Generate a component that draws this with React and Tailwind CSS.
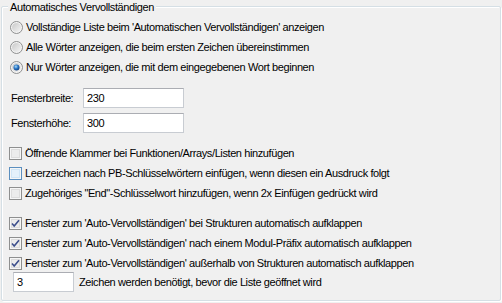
import React from 'react';

const font = { fontFamily: '"Liberation Sans", Arial, sans-serif' };

function Radio({ checked }) {
  return (
    <svg width="13" height="13" viewBox="0 0 13 13" className="shrink-0">
      <defs>
        <linearGradient id="rbg" x1="0" y1="0" x2="1" y2="1">
          <stop offset="0" stopColor="#c9c9c9" />
          <stop offset="1" stopColor="#f4f4f4" />
        </linearGradient>
        <radialGradient id="rdot" cx="0.4" cy="0.35" r="0.7">
          <stop offset="0" stopColor="#a9dcf8" />
          <stop offset="0.5" stopColor="#2a76c6" />
          <stop offset="1" stopColor="#0f3a78" />
        </radialGradient>
      </defs>
      <circle cx="6.5" cy="6.5" r="6" fill="#f4f4f4" stroke="#8e8f8f" strokeWidth="1" />
      <circle cx="6.5" cy="6.5" r="4.5" fill="url(#rbg)" />
      {checked && <circle cx="6.5" cy="6.5" r="3" fill="url(#rdot)" />}
    </svg>
  );
}

function Check({ checked, hover }) {
  return (
    <svg width="13" height="13" viewBox="0 0 13 13" className="shrink-0">
      <rect x="0.5" y="0.5" width="12" height="12" fill="#f6f6f6" stroke={hover ? '#5b8fbf' : '#8e8f8f'} />
      <rect x="2" y="2" width="9" height="9" fill={hover ? '#cfe5f6' : '#dcdcdc'} />
      <rect x="3" y="3" width="7" height="7" fill={hover ? '#e4f1fb' : '#ececec'} />
      {checked && (
        <path d="M3 6.5 L5.2 9 L10 3.2" fill="none" stroke="#3d4f8c" strokeWidth="1.6" />
      )}
    </svg>
  );
}

function TextBox({ value, className }) {
  return (
    <div className={`h-[20px] bg-white border border-[#c8ccd2] border-t-[#abadb3] flex items-center pl-[3px] text-[11px] ${className}`}>
      {value}
    </div>
  );
}

export default function App() {
  const radios = [
    ["Vollständige Liste beim 'Automatischen Vervollständigen' anzeigen", false],
    ['Alle Wörter anzeigen, die beim ersten Zeichen übereinstimmen', false],
    ['Nur Wörter anzeigen, die mit dem eingegebenen Wort beginnen', true],
  ];
  const checks1 = [
    ['Öffnende Klammer bei Funktionen/Arrays/Listen hinzufügen', false, false],
    ['Leerzeichen nach PB-Schlüsselwörtern einfügen, wenn diesen ein Ausdruck folgt', false, true],
    ['Zugehöriges "End"-Schlüsselwort hinzufügen, wenn 2x Einfügen gedrückt wird', false, false],
  ];
  const checks2 = [
    ["Fenster zum 'Auto-Vervollständigen' bei Strukturen automatisch aufklappen"],
    ["Fenster zum 'Auto-Vervollständigen' nach einem Modul-Präfix automatisch aufklappen"],
    ["Fenster zum 'Auto-Vervollständigen' außerhalb von Strukturen automatisch aufklappen"],
  ];

  return (
    <div className="w-[502px] h-[303px] bg-[#f0f0f0] text-black text-[11px] tracking-[-0.4px] pl-[1px] pt-[6px]" style={font}>
      <div className="relative w-[500px] h-[295px] border border-[#d5dfe5] rounded-[2px] shadow-[inset_1px_1px_0_#fff,1px_1px_0_#fff] pl-[7px] pt-[10px]">
        <div className="absolute left-[6px] top-[-7px] bg-[#f0f0f0] px-[2px] leading-[14px]">Automatisches Vervollständigen</div>

        {radios.map(([t, c]) => (
          <div key={t} className="h-[20px] flex items-center gap-[3px] pl-[1px]">
            <Radio checked={c} />
            <span>{t}</span>
          </div>
        ))}

        <div className="mt-[11px] h-[20px] flex items-center">
          <span className="w-[74px] pl-[2px]">Fensterbreite:</span>
          <TextBox value="230" className="w-[101px]" />
        </div>
        <div className="mt-[5px] h-[20px] flex items-center">
          <span className="w-[74px] pl-[2px]">Fensterhöhe:</span>
          <TextBox value="300" className="w-[101px]" />
        </div>

        <div className="mt-[10px]">
          {checks1.map(([t, c, h]) => (
            <div key={t} className="h-[20px] flex items-center gap-[3px]">
              <Check checked={c} hover={h} />
              <span>{t}</span>
            </div>
          ))}
        </div>

        <div className="mt-[10px]">
          {checks2.map(([t]) => (
            <div key={t} className="h-[20px] flex items-center gap-[3px]">
              <Check checked />
              <span>{t}</span>
            </div>
          ))}
        </div>

        <div className="mt-[-1px] h-[20px] flex items-center pl-[4px]">
          <TextBox value="3" className="w-[61px]" />
          <span className="ml-[5px]">Zeichen werden benötigt, bevor die Liste geöffnet wird</span>
        </div>
      </div>
    </div>
  );
}
